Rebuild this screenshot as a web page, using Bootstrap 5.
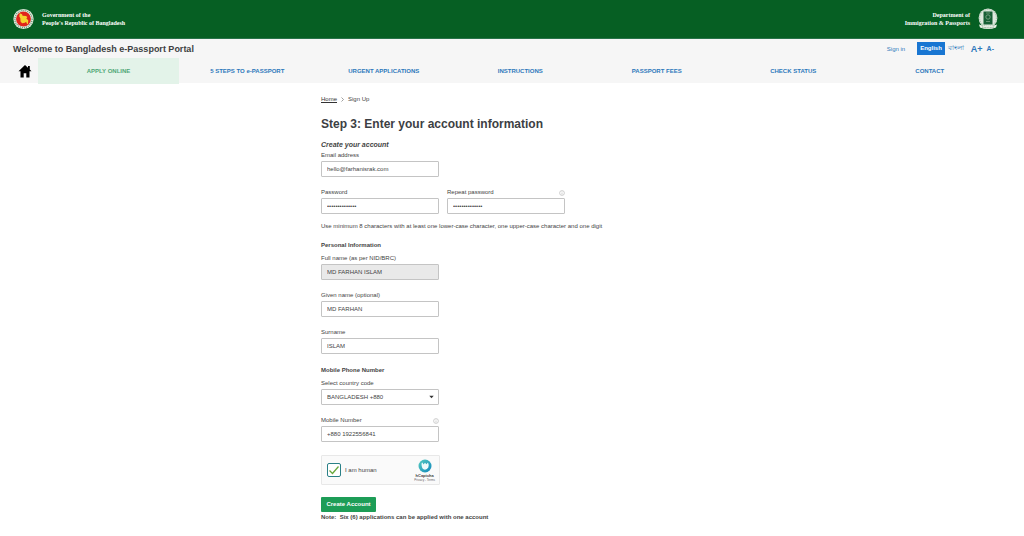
<!DOCTYPE html>
<html lang="en">
<head>
<meta charset="utf-8">
<meta name="viewport" content="width=device-width, initial-scale=1">
<title>Bangladesh e-Passport Portal</title>
<link href="https://cdn.jsdelivr.net/npm/bootstrap@5.3.0/dist/css/bootstrap.min.css" rel="stylesheet">
<style>
  body { font-family: "Liberation Sans", Arial, sans-serif; font-size: 6px; line-height: 10px; color: #444; background: #fff; }
  .gov-bar { background: #065f23; height: 39px; padding: 0 26px 0 13px; color: #fff; font: bold 6px/8px "Liberation Serif", serif; border-bottom: 1px solid #28734a; }
  .portal-bar { background: #f6f6f6; height: 44px; }
  .portal-top { height: 19px; padding: 0 30px 0 13px; }
  .portal-title { font-size: 9px; line-height: 18px; font-weight: bold; color: #3d3f42; }
  .portal-bar a { color: #2d78bb; text-decoration: none; }
  .lang { padding: 1px 3px; height: 13px; }
  .lang-bn { font-size: 7px; }
  .portal-bar .lang-on { background: #1976d2; color: #fff; font-weight: bold; }
  .size-up { font-size: 9px; font-weight: bold; }
  .size-down { font-size: 7px; font-weight: bold; }
  .menu { display: grid; grid-template-columns: 25px 141px repeat(6, 1fr); padding: 0 26px 0 13px; height: 25px; font-weight: bold; text-align: center; line-height: 26px; }
  .portal-bar .menu-on { background: #e3f3e9; color: #4fa777; }
  .sheet { max-width: 382px; padding-top: 11px; }
  .sheet h1 { font-size: 12px; line-height: 16px; font-weight: bold; color: #3c4043; margin: 12px 0 8px; }
  .sheet h2 { font-size: 7px; line-height: 10px; font-weight: bold; font-style: italic; margin: 0; }
  .sheet h3 { font-size: 6px; line-height: 10px; font-weight: bold; margin: 0 0 3px; padding-top: 1px; }
  .crumbs a { color: #333; }
  .field { width: 118px; margin-bottom: 10px; }
  .field label { display: block; margin-bottom: 1px; }
  .field .form-control, .field .form-select { height: 16px; min-height: 0; padding: 0 5px; font-size: 6px; line-height: 14px; color: #444; border: 1px solid #c4c4c4; border-radius: 1px; }
  .field .form-control:disabled { background: #e9e9e9; }
  .field .form-select { background-size: 5px 4px; background-position: right 4px center; background-image: url("data:image/svg+xml,%3Csvg xmlns='http://www.w3.org/2000/svg' viewBox='0 0 5 4'%3E%3Cpath d='M.3.8h4.4L2.5 3.2z' fill='%23333'/%3E%3C/svg%3E"); }
  .hint { margin: -3px 0 8px; }
  .captcha { width: 119px; height: 30px; margin-top: 13px; padding: 0 4px 0 5px; background: #fafafa; border: 1px solid #e8e8e8; border-radius: 1px; }
  .captcha .form-check-input { width: 14px; height: 14px; margin: 0; border: 1px solid #2a8087; border-radius: 2px; background-color: #fff; }
  .captcha .form-check-input:checked { background-size: 12px 12px; background-image: url("data:image/svg+xml,%3Csvg xmlns='http://www.w3.org/2000/svg' viewBox='0 0 12 12'%3E%3Cpath d='M1.5 6.5l3 3 6-7' fill='none' stroke='%2369a83c' stroke-width='1.3'/%3E%3C/svg%3E"); }
  .captcha-brand { font-size: 4px; line-height: 5px; font-weight: bold; }
  .captcha-brand small { font-size: 3px; line-height: 4px; display: block; font-weight: normal; }
  .captcha-brand a { color: #666; text-decoration: none; }
  .create { display: block; margin-top: 12px; height: 15px; width: 55px; padding: 0; background: #1d9d57; color: #fff; border: 0; border-radius: 1px; font-size: 6px; line-height: 15px; font-weight: bold; }
</style>
</head>
<body>
<header>
  <div class="gov-bar d-flex align-items-center justify-content-between">
    <div class="d-flex align-items-center gap-2">
      <svg width="21" height="22" viewBox="0 0 22 22" aria-hidden="true">
        <circle cx="11" cy="11" r="10.6" fill="#e4ecdf"/><circle cx="11" cy="11" r="9" fill="none" stroke="#5f9470" stroke-width="1.4" stroke-dasharray="1 1.1"/>
        <circle cx="11" cy="11" r="7.8" fill="#e0251b"/>
        <path d="M7 5l2.5 1 .5 1.5 3.5.4 1.5 1-1 1.5 2 2-.3 4-1.2-.6-.8-2-1.2 1.2-3 .5-1.6-2-.2-3.2L6.6 8.5z" fill="#f5d32e"/>
      </svg>
      <div>Government of the<br>People's Republic of Bangladesh</div>
    </div>
    <div class="d-flex align-items-center gap-2 text-end">
      <div>Department of<br>Immigration &amp; Passports</div>
      <svg width="20" height="22" viewBox="0 0 20 22" aria-hidden="true">
        <circle cx="10" cy="10" r="9.4" fill="#dfe9df"/><circle cx="10" cy="10" r="8.4" fill="none" stroke="#86a98c" stroke-width=".8" stroke-dasharray="1 1"/>
        <rect x="5.500" y="3.500" width="9" height="13" rx=".5" fill="#175f35"/>
        <circle cx="10" cy="9" r="2.2" fill="none" stroke="#87ab8e" stroke-width=".8"/><path d="M8 13.500h4M8 5h4" stroke="#87ab8e" stroke-width=".7"/>
        <path d="M1 16.500q9 3.500 18 0l-1 3q-8 3-16 0z" fill="#e8eee5"/><path d="M4 19q6 1.500 12 0" fill="none" stroke="#73957b" stroke-width=".8" stroke-dasharray="1 .6"/>
      </svg>
    </div>
  </div>
  <div class="portal-bar">
    <div class="portal-top d-flex align-items-center justify-content-between">
      <div class="portal-title">Welcome to Bangladesh e-Passport Portal</div>
      <div class="d-flex align-items-center">
        <a href="#" class="me-2 pe-1">Sign in</a>
        <a href="#" class="lang lang-on">English</a>
        <a href="#" class="lang lang-bn" lang="bn">বাংলা</a>
        <a href="#" class="size-up ms-1 me-1">A+</a>
        <a href="#" class="size-down">A-</a>
      </div>
    </div>
    <nav class="menu">
      <a href="#" class="d-flex align-items-center ps-1" aria-label="Home"><svg width="16" height="14" viewBox="0 0 16 14" aria-hidden="true"><path d="M8 1L1.500 7.200H3.500V13.500H6.700V9.300H9.300V13.500H12.500V7.200H14.500L12.800 5.500V2H11V3.800z" fill="#000"/></svg></a>
      <a href="#" class="menu-on">APPLY ONLINE</a>
      <a href="#">5 STEPS TO e-PASSPORT</a>
      <a href="#">URGENT APPLICATIONS</a>
      <a href="#">INSTRUCTIONS</a>
      <a href="#">PASSPORT FEES</a>
      <a href="#">CHECK STATUS</a>
      <a href="#">CONTACT</a>
    </nav>
  </div>
</header>
<main class="sheet mx-auto">
  <nav class="crumbs d-flex align-items-center" aria-label="breadcrumb">
    <a href="#">Home</a>
    <svg class="mx-1" width="3" height="5" viewBox="0 0 3 5" aria-hidden="true"><path d="M.5.5l2 2-2 2" fill="none" stroke="#777" stroke-width=".7"/></svg>
    <span>Sign Up</span>
  </nav>
  <h1>Step 3: Enter your account information</h1>
  <form>
    <h2>Create your account</h2>
    <div class="field"><label for="email">Email address</label><input id="email" type="email" class="form-control" value="hello@farhanisrak.com"></div>
    <div class="d-flex gap-2">
      <div class="field"><label for="pw">Password</label><input id="pw" type="password" class="form-control" value="passwordabcdef"></div>
      <div class="field"><div class="d-flex justify-content-between align-items-center"><label for="pw2">Repeat password</label><svg width="6" height="6" viewBox="0 0 6 6" aria-hidden="true"><circle cx="3" cy="3" r="2.4" fill="none" stroke="#bbb" stroke-width=".7"/><path d="M3 1.600v.7M3 2.800v1.700" stroke="#bbb" stroke-width=".7"/></svg></div><input id="pw2" type="password" class="form-control" value="passwordabcdef"></div>
    </div>
    <p class="hint">Use minimum 8 characters with at least one lower-case character, one upper-case character and one digit</p>
    <h3>Personal Information</h3>
    <div class="field"><label for="full">Full name (as per NID/BRC)</label><input id="full" class="form-control" value="MD FARHAN ISLAM" disabled></div>
    <div class="field"><label for="given">Given name (optional)</label><input id="given" class="form-control" value="MD FARHAN"></div>
    <div class="field"><label for="sur">Surname</label><input id="sur" class="form-control" value="ISLAM"></div>
    <h3>Mobile Phone Number</h3>
    <div class="field"><label for="code">Select country code</label><select id="code" class="form-select"><option>BANGLADESH +880</option></select></div>
    <div class="field"><div class="d-flex justify-content-between align-items-center"><label for="mobile">Mobile Number</label><svg width="6" height="6" viewBox="0 0 6 6" aria-hidden="true"><circle cx="3" cy="3" r="2.4" fill="none" stroke="#bbb" stroke-width=".7"/><path d="M3 1.600v.7M3 2.800v1.700" stroke="#bbb" stroke-width=".7"/></svg></div><input id="mobile" type="tel" class="form-control" value="+880 1922556841"></div>
    <div class="captcha d-flex align-items-center">
      <input id="human" type="checkbox" class="form-check-input" checked><label for="human" class="ms-1">I am human</label>
      <div class="captcha-brand ms-auto text-center">
        <svg class="d-block mx-auto" width="14" height="14" viewBox="0 0 14 14" aria-hidden="true"><defs><linearGradient id="teal" x2="1" y2="1"><stop stop-color="#58cdbf"/><stop offset="1" stop-color="#0f86bd"/></linearGradient></defs><circle cx="7" cy="7" r="6.500" fill="url(#teal)"/><path d="M3.500 5q0-1.500 1-1.600l1 2.200L7 3.800l1.400 1.400L10 3.500q1.500 3 .3 5T7 10.700Q3.500 10.500 3.500 5z" fill="#eefafa"/></svg>
        hCaptcha
        <small><a href="#">Privacy</a> - <a href="#">Terms</a></small>
      </div>
    </div>
    <button type="button" class="create">Create Account</button>
    <p class="m-0 fw-bold">Note: &nbsp;Six (6) applications can be applied with one account</p>
  </form>
</main>
<script src="https://cdn.jsdelivr.net/npm/bootstrap@5.3.0/dist/js/bootstrap.bundle.min.js"></script>
</body>
</html>
